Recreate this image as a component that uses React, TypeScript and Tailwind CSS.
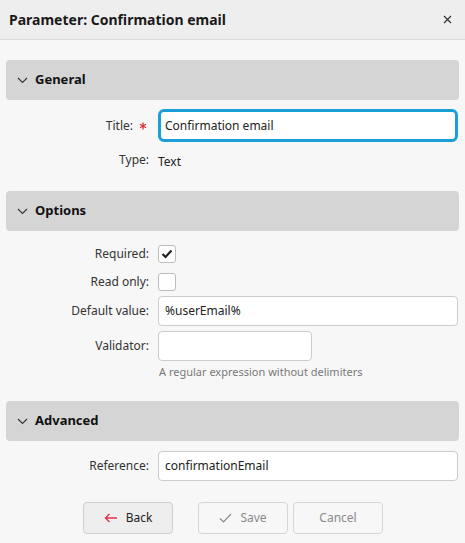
import React from 'react';

const Chevron = () => (
  <svg width="11" height="7" viewBox="0 0 11 7" fill="none" stroke="#333" strokeWidth="1.1">
    <path d="M1 1l4.5 4.5L10 1" />
  </svg>
);

const Section: React.FC<{ title: string }> = ({ title }) => (
  <div className="mx-[6px] h-[40px] bg-[#d5d5d5] rounded-[4px] flex items-center pl-[11px] gap-[7px]">
    <Chevron />
    <span className="text-[13px] font-bold text-[#111]">{title}</span>
  </div>
);

const Row: React.FC<{ label: React.ReactNode; children: React.ReactNode; className?: string }> = ({ label, children, className }) => (
  <div className={`flex items-center ${className ?? ''}`}>
    <div className="w-[149px] shrink-0 flex justify-end items-center text-[12px] text-[#333]">{label}</div>
    <div className="flex-1 ml-[9px] mr-[7px]">{children}</div>
  </div>
);

const Star = () => (
  <svg width="8" height="8" viewBox="0 0 8 8" stroke="#d0343c" strokeWidth="1.3" className="ml-[6px] mr-[2px]">
    <path d="M4 0.5v7M1 2.25l6 3.5M7 2.25l-6 3.5" />
  </svg>
);

export default function App() {
  return (
    <div
      className="w-[465px] h-[543px] bg-[#f7f7f7] overflow-hidden text-[#222]"
      style={{ fontFamily: '"Segoe UI", "Noto Sans", sans-serif' }}
    >
      {/* Header */}
      <div className="h-[40px] bg-[#eeeeee] border-b border-[#d9d9d9] flex items-center justify-between pl-[9px] pr-[13px]">
        <h1 className="text-[14px] font-bold text-[#1a1a1a]">Parameter: Confirmation email</h1>
        <svg width="9" height="9" viewBox="0 0 9 9" stroke="#333" strokeWidth="1.2">
          <path d="M1 1l7 7M8 1l-7 7" />
        </svg>
      </div>

      <div className="pt-[20px]">
        <Section title="General" />
        <Row className="mt-[9px]" label={<><span>Title:</span><Star /></>}>
          <div className="h-[33px] bg-white border-[3px] border-[#1a9fd9] rounded-[6px] flex items-center px-[4px] text-[12px]">
            Confirmation email
          </div>
        </Row>
        <Row className="mt-[6px] h-[24px]" label="Type:">
          <span className="text-[12px]">Text</span>
        </Row>

        <div className="mt-[19px]">
          <Section title="Options" />
        </div>
        <Row className="mt-[12px] h-[22px]" label="Required:">
          <div className="w-[18px] h-[18px] bg-white border border-[#bdbdbd] rounded-[3px] flex items-center justify-center">
            <svg width="12" height="10" viewBox="0 0 12 10" fill="none" stroke="#222" strokeWidth="2.2">
              <path d="M1.5 5l3 3 6-6.5" />
            </svg>
          </div>
        </Row>
        <Row className="mt-[6px] h-[22px]" label="Read only:">
          <div className="w-[18px] h-[18px] bg-white border border-[#bdbdbd] rounded-[3px]" />
        </Row>
        <Row className="mt-[3px]" label="Default value:">
          <div className="h-[30px] bg-white border border-[#cccccc] rounded-[4px] flex items-center px-[6px] text-[12px]">
            %userEmail%
          </div>
        </Row>
        <Row className="mt-[5px]" label="Validator:">
          <div className="w-[154px] h-[30px] bg-white border border-[#cccccc] rounded-[4px]" />
        </Row>
        <div className="pl-[159px] mt-[3px] text-[11px] leading-[16px] text-[#777]">A regular expression without delimiters</div>

        <div className="mt-[21px]">
          <Section title="Advanced" />
        </div>
        <Row className="mt-[10px]" label="Reference:">
          <div className="h-[30px] bg-white border border-[#cccccc] rounded-[4px] flex items-center px-[6px] text-[12px]">
            confirmationEmail
          </div>
        </Row>

        {/* Buttons */}
        <div className="flex mt-[21px] pl-[83px]">
          <button className="w-[90px] h-[32px] bg-[#eeeeee] border border-[#cfcfcf] rounded-[4px] flex items-center justify-center gap-[8px] text-[12px] text-[#222]">
            <svg width="14" height="10" viewBox="0 0 14 10" fill="none" stroke="#e0354f" strokeWidth="1.4">
              <path d="M13 5H1.5M5.5 1L1.5 5l4 4" />
            </svg>
            Back
          </button>
          <button className="ml-[25px] w-[90px] h-[32px] bg-[#f7f7f7] border border-[#d6d6d6] rounded-[4px] flex items-center justify-center gap-[8px] text-[12px] text-[#8a8a8a]">
            <svg width="13" height="10" viewBox="0 0 13 10" fill="none" stroke="#8a8a8a" strokeWidth="1.2">
              <path d="M1 5.5l3.5 3.5L12 1" />
            </svg>
            Save
          </button>
          <button className="ml-[5px] w-[90px] h-[32px] bg-[#f7f7f7] border border-[#d6d6d6] rounded-[4px] flex items-center justify-center text-[12px] text-[#8a8a8a]">
            Cancel
          </button>
        </div>
      </div>
    </div>
  );
}
